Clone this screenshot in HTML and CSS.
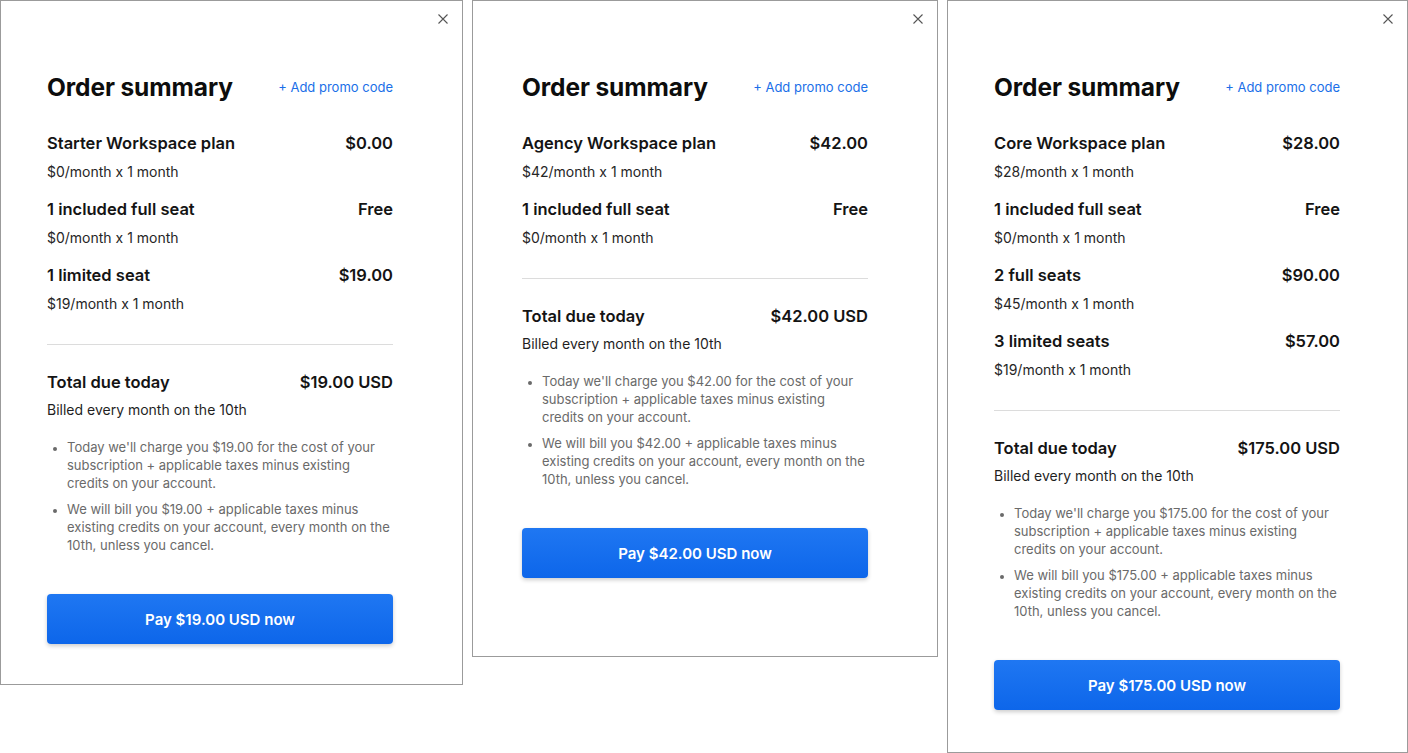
FILE: index.html
```html
<!DOCTYPE html>
<html>
<head>
<meta charset="utf-8">
<link rel="stylesheet" href="styles.css">
</head>
<body>
<div class="page">
  <section class="panel panel-1">
    <button class="close" aria-label="Close"><svg width="12" height="12" viewBox="0 0 12 12"><path d="M1.5 1.5L10.5 10.5M10.5 1.5L1.5 10.5" stroke="#555" stroke-width="1.1" fill="none"/></svg></button>
    <div class="content">
      <div class="header"><h1 class="title">Order summary</h1><a class="promo">+ Add promo code</a></div>
      <div class="item"><div class="row"><span>Starter Workspace plan</span><span>$0.00</span></div><div class="sub">$0/month x 1 month</div></div>
      <div class="item"><div class="row"><span>1 included full seat</span><span>Free</span></div><div class="sub">$0/month x 1 month</div></div>
      <div class="item"><div class="row"><span>1 limited seat</span><span>$19.00</span></div><div class="sub">$19/month x 1 month</div></div>
      <hr class="divider">
      <div class="row total"><span>Total due today</span><span>$19.00 USD</span></div>
      <div class="billed">Billed every month on the 10th</div>
      <ul class="notes">
        <li>Today we'll charge you $19.00 for the cost of your subscription + applicable taxes minus existing credits on your account.</li>
        <li>We will bill you $19.00 + applicable taxes minus existing credits on your account, every month on the 10th, unless you cancel.</li>
      </ul>
      <button class="pay">Pay $19.00 USD now</button>
    </div>
  </section>
  <section class="panel panel-2">
    <button class="close" aria-label="Close"><svg width="12" height="12" viewBox="0 0 12 12"><path d="M1.5 1.5L10.5 10.5M10.5 1.5L1.5 10.5" stroke="#555" stroke-width="1.1" fill="none"/></svg></button>
    <div class="content">
      <div class="header"><h1 class="title">Order summary</h1><a class="promo">+ Add promo code</a></div>
      <div class="item"><div class="row"><span>Agency Workspace plan</span><span>$42.00</span></div><div class="sub">$42/month x 1 month</div></div>
      <div class="item"><div class="row"><span>1 included full seat</span><span>Free</span></div><div class="sub">$0/month x 1 month</div></div>
      <hr class="divider">
      <div class="row total"><span>Total due today</span><span>$42.00 USD</span></div>
      <div class="billed">Billed every month on the 10th</div>
      <ul class="notes">
        <li>Today we'll charge you $42.00 for the cost of your subscription + applicable taxes minus existing credits on your account.</li>
        <li>We will bill you $42.00 + applicable taxes minus existing credits on your account, every month on the 10th, unless you cancel.</li>
      </ul>
      <button class="pay">Pay $42.00 USD now</button>
    </div>
  </section>
  <section class="panel panel-3">
    <button class="close" aria-label="Close"><svg width="12" height="12" viewBox="0 0 12 12"><path d="M1.5 1.5L10.5 10.5M10.5 1.5L1.5 10.5" stroke="#555" stroke-width="1.1" fill="none"/></svg></button>
    <div class="content">
      <div class="header"><h1 class="title">Order summary</h1><a class="promo">+ Add promo code</a></div>
      <div class="item"><div class="row"><span>Core Workspace plan</span><span>$28.00</span></div><div class="sub">$28/month x 1 month</div></div>
      <div class="item"><div class="row"><span>1 included full seat</span><span>Free</span></div><div class="sub">$0/month x 1 month</div></div>
      <div class="item"><div class="row"><span>2 full seats</span><span>$90.00</span></div><div class="sub">$45/month x 1 month</div></div>
      <div class="item"><div class="row"><span>3 limited seats</span><span>$57.00</span></div><div class="sub">$19/month x 1 month</div></div>
      <hr class="divider">
      <div class="row total"><span>Total due today</span><span>$175.00 USD</span></div>
      <div class="billed">Billed every month on the 10th</div>
      <ul class="notes">
        <li>Today we'll charge you $175.00 for the cost of your subscription + applicable taxes minus existing credits on your account.</li>
        <li>We will bill you $175.00 + applicable taxes minus existing credits on your account, every month on the 10th, unless you cancel.</li>
      </ul>
      <button class="pay">Pay $175.00 USD now</button>
    </div>
  </section>
</div>
</body>
</html>
```

FILE: styles.css
```css
* { box-sizing: border-box; }
html, body { margin: 0; padding: 0; background: #fff; }
body { font-family: Inter, "Noto Sans", sans-serif; color: #111; }
.page {
  display: flex;
  align-items: flex-start;
  gap: 9px;
  width: 1408px;
  height: 753px;
  overflow: hidden;
}
.panel {
  position: relative;
  border: 1px solid #9b9b9b;
  background: #fff;
  padding: 70px 0 40px 46px;
  flex: none;
}
.panel-1 { width: 463px; }
.panel-2 { width: 466px; padding-left: 49px; padding-bottom: 78px; }
.panel-3 { width: 461px; height: 753px; }
.close {
  position: absolute;
  top: 11px;
  right: 12px;
  width: 14px;
  height: 14px;
  padding: 1px;
  border: 0;
  background: none;
  display: flex;
}
.content { width: 346px; }
.header {
  display: flex;
  justify-content: space-between;
  align-items: center;
  height: 32px;
  margin-bottom: 28px;
}
.title {
  margin: 0;
  font-size: 24.5px;
  font-weight: 700;
  letter-spacing: -0.1px;
  line-height: 32px;
  color: #0d0d0d;
}
.promo {
  font-size: 13px;
  color: #1a6fe8;
  line-height: 20px;
}
.item { margin-top: 15px; }
.row {
  display: flex;
  justify-content: space-between;
  font-size: 16.5px;
  font-weight: 600;
  line-height: 24px;
  color: #141414;
}
.sub {
  margin-top: 7px;
  font-size: 14px;
  line-height: 20px;
  color: #262626;
}
.divider {
  border: 0;
  border-top: 1px solid #dcdcdc;
  margin: 30px 0 0;
  height: 0;
}
.total { margin-top: 25px; }
.billed {
  margin-top: 6px;
  font-size: 14px;
  line-height: 20px;
  color: #1f1f1f;
}
.notes {
  margin: 18px 0 0;
  padding-left: 20px;
  font-size: 13px;
  line-height: 18px;
  color: #6a6a6a;
}
.notes li + li { margin-top: 8px; }
.notes li::marker { font-size: 11px; }
.pay {
  display: block;
  margin-top: 40px;
  width: 346px;
  height: 50px;
  border: 0;
  border-radius: 4px;
  background: linear-gradient(#1f77f2, #0d66ea);
  box-shadow: 0 2px 4px rgba(0,0,0,0.2);
  color: #fff;
  font-family: Inter, "Noto Sans", sans-serif;
  font-size: 15px;
  font-weight: 600;
}
```
